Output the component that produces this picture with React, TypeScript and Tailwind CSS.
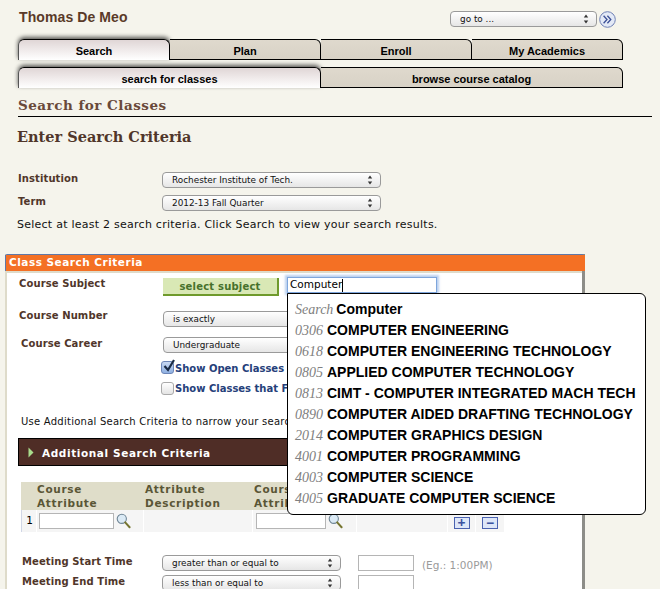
import React from "react";

const verdana = "font-['DejaVu_Sans',sans-serif]";
const arial = "font-['Liberation_Sans',Arial,sans-serif]";
const serif = "font-['DejaVu_Serif',Georgia,serif]";

const results = [
  { code: "0306", name: "COMPUTER ENGINEERING" },
  { code: "0618", name: "COMPUTER ENGINEERING TECHNOLOGY" },
  { code: "0805", name: "APPLIED COMPUTER TECHNOLOGY" },
  { code: "0813", name: "CIMT - COMPUTER INTEGRATED MACH TECH" },
  { code: "0890", name: "COMPUTER AIDED DRAFTING TECHNOLOGY" },
  { code: "2014", name: "COMPUTER GRAPHICS DESIGN" },
  { code: "4001", name: "COMPUTER PROGRAMMING" },
  { code: "4003", name: "COMPUTER SCIENCE" },
  { code: "4005", name: "GRADUATE COMPUTER SCIENCE" },
];

function Select({ label, className }: { label: string; className: string }) {
  return (
    <div
      className={`flex h-[16px] items-center justify-between rounded-[4px] border border-[#9a9a9a] bg-gradient-to-b from-white to-[#e6e6e6] pl-[9px] pr-[7px] text-[8.9px] text-[#111] ${verdana} ${className}`}
    >
      <span className="translate-y-[1px] whitespace-nowrap">{label}</span>
      <svg width="6" height="10" viewBox="0 0 6 10" className="shrink-0">
        <path d="M3 0.5 5.2 3.5H0.8Z M3 9.5 5.2 6.5H0.8Z" fill="#333" />
      </svg>
    </div>
  );
}

function Tab({ label, active, className }: { label: string; active?: boolean; className: string }) {
  return (
    <div
      className={`flex h-[21px] items-center justify-center rounded-tr-[6px] border-t border-black text-[11px] font-bold text-black ${arial} ${className} ${
        active
          ? "rounded-tl-[6px] border-l border-l-[#555] border-r border-r-black bg-gradient-to-b from-[#e0d6d6] to-white pt-[2px] shadow-[0_-2px_4px_rgba(0,0,0,0.65)]"
          : "border-b border-r border-black bg-gradient-to-b from-[#dfd9cd] to-[#d8d2c6] pt-[3px]"
      }`}
    >
      {label}
    </div>
  );
}

function Magnifier() {
  return (
    <svg width="15" height="16" viewBox="0 0 15 16" className="shrink-0">
      <circle cx="5.8" cy="5.8" r="4.6" fill="#dbeaf5" stroke="#6f8595" strokeWidth="1.1" />
      <path d="M9.2 9.4 13.6 14.2" stroke="#76752f" strokeWidth="2" strokeLinecap="round" />
    </svg>
  );
}

function Label({ children, className }: { children: React.ReactNode; className: string }) {
  return (
    <div className={`whitespace-nowrap text-[10px] font-bold tracking-[0.1px] text-[#50362a] ${verdana} ${className}`}>
      {children}
    </div>
  );
}

export default function App() {
  return (
    <div className="relative h-[589px] w-[660px] overflow-hidden bg-[#f5f4ec]">
      {/* top bar */}
      <div className="flex h-[39px] items-start justify-between pl-[19px] pr-[44px] pt-[10px]">
        <div className={`text-[14px] font-bold leading-[15px] tracking-[0.1px] text-[#5a3a28] ${arial}`}>Thomas De Meo</div>
        <div className="flex items-center gap-[2px]">
          <Select label="go to ..." className="w-[147px]" />
          <svg width="17" height="17" viewBox="0 0 17 17" className="mt-[1px]">
            <circle cx="8.5" cy="8.5" r="7.8" fill="#e3e9f6" stroke="#6f80b5" strokeWidth="1" />
            <path d="M4.6 4.8 8 8.5 4.6 12.2M8.4 4.8 11.8 8.5 8.4 12.2" fill="none" stroke="#3b4f96" strokeWidth="1.3" />
          </svg>
        </div>
      </div>

      {/* tabs */}
      <div className="ml-[18px] flex">
        <Tab label="Search" active className="w-[152px]" />
        <Tab label="Plan" className="w-[151px]" />
        <Tab label="Enroll" className="w-[151px]" />
        <Tab label="My Academics" className="w-[151px]" />
      </div>
      <div className="ml-[18px] mt-[7px] flex">
        <Tab label="search for classes" active className="w-[303px]" />
        <Tab label="browse course catalog" className="w-[302px]" />
      </div>

      {/* headings */}
      <div className="ml-[18px] mr-[8px] mt-[9px] h-[20px] border-b border-black">
        <div className={`text-[13.5px] font-bold leading-[17px] tracking-[0.5px] text-[#69493a] ${serif}`}>
          Search for Classes
        </div>
      </div>
      <div className={`ml-[17px] mt-[10px] text-[14.5px] font-bold leading-[20px] text-[#50362a] ${serif}`}>
        Enter Search Criteria
      </div>

      {/* institution and term */}
      <div className="ml-[18px] mt-[25px] flex h-[16px] items-center">
        <Label className="w-[144px] -translate-y-[2px]">Institution</Label>
        <Select label="Rochester Institute of Tech." className="w-[219px]" />
      </div>
      <div className="ml-[18px] mt-[7px] flex h-[16px] items-center">
        <Label className="w-[144px] -translate-y-[2px]">Term</Label>
        <Select label="2012-13 Fall Quarter" className="w-[219px]" />
      </div>
      <div className={`ml-[17px] mt-[6px] h-[16px] text-[11px] leading-[16px] tracking-[0.25px] text-[#111] ${verdana}`}>
        Select at least 2 search criteria. Click Search to view your search results.
      </div>

      {/* panel */}
      <div className="ml-[5px] mt-[21px] h-[400px] w-[580px] border-l-[2px] border-r-[3px] border-t border-l-[#dedbca] border-r-[#8d8d88] border-t-[#5f78a8] bg-white">
        <div className={`-ml-[2px] -mr-[3px] flex h-[16px] items-center border-l border-[#5f78a8] bg-[#f47024] pl-[3px] text-[10.5px] font-bold tracking-[0.5px] text-white ${verdana}`}>
          Class Search Criteria
        </div>
        <div className="h-[2px] bg-[#dedbca]" />

        <div className="flex h-[23px] items-start pl-[12px] pt-[5px]">
          <Label className="w-[144px] -translate-y-[2px]">Course Subject</Label>
          <div className={`flex h-[18px] w-[116px] items-center justify-center border-b-[2px] border-r-[2px] border-[#6f9a2c] bg-[#d9e8b5] text-[10px] font-bold tracking-[0.2px] text-[#47712c] ${verdana}`}>
            select subject
          </div>
          <div className={`ml-[8px] -mt-[1px] flex h-[16px] w-[150px] items-center border border-[#7ea6dc] bg-white pl-[2px] text-[10.5px] text-black shadow-[0_0_2px_2px_rgba(130,170,225,0.55)] ${verdana}`}>
            Computer<span className="h-[13px] w-px bg-black" />
          </div>
        </div>

        <div className="mt-[15px] flex h-[16px] items-center pl-[12px]">
          <Label className="w-[144px] -translate-y-[4px]">Course Number</Label>
          <Select label="is exactly" className="w-[180px]" />
        </div>
        <div className="mt-[10px] flex h-[16px] items-center pl-[14px]">
          <Label className="w-[142px] -translate-y-[2px]">Course Career</Label>
          <Select label="Undergraduate" className="w-[180px]" />
        </div>

        <div className="ml-[154px] mt-[7px] flex h-[14px] items-center gap-[1px]">
          <div className="relative h-[13px] w-[13px] rounded-[3px] border border-[#6d86b8] bg-gradient-to-b from-[#c9d9f2] to-[#8fb0e2]">
            <svg width="15" height="15" viewBox="0 0 15 15" className="absolute -top-[3px] left-[0px]">
              <path d="M2.5 7 6 11 12 1" fill="none" stroke="#1a2a44" strokeWidth="2.2" />
            </svg>
          </div>
          <span className={`translate-y-[1px] whitespace-nowrap text-[10px] font-bold text-[#25407a] ${verdana}`}>Show Open Classes</span>
        </div>
        <div className="ml-[154px] mt-[7px] flex h-[14px] items-center gap-[1px]">
          <div className="h-[13px] w-[13px] rounded-[3px] border border-[#aaa] bg-gradient-to-b from-white to-[#e4e4e4]" />
          <span className={`whitespace-nowrap text-[10px] font-bold text-[#25407a] ${verdana}`}>Show Classes that F</span>
        </div>

        <div className={`ml-[14px] mt-[20px] h-[14px] whitespace-nowrap text-[10px] leading-[14px] tracking-[0.25px] text-[#111] ${verdana}`}>
          Use Additional Search Criteria to narrow your search
        </div>

        {/* additional criteria bar */}
        <div className="ml-[11px] mt-[9px] flex h-[28px] w-[560px] items-center gap-[8px] border border-black bg-[#4f2d26] pl-[9px]">
          <svg width="6" height="11" viewBox="0 0 6 11">
            <path d="M0.5 0.5 5.5 5.5 0.5 10.5Z" fill="#a9dc8c" />
          </svg>
          <span className={`translate-y-[2px] whitespace-nowrap text-[10.5px] font-bold tracking-[0.6px] text-white ${verdana}`}>
            Additional Search Criteria
          </span>
        </div>

        {/* attribute table */}
        <div className="ml-[14px] mt-[16px] w-[484px]">
          <div className={`flex h-[28px] bg-[#dfddc9] text-[10.5px] font-bold leading-[14px] tracking-[0.7px] text-[#5a5636] ${verdana}`}>
            <div className="ml-[16px] w-[108px]">Course<br />Attribute</div>
            <div className="w-[109px]">Attribute<br />Description</div>
            <div>Course<br />Attribute</div>
          </div>
          <div className="flex h-[22px] gap-[1px]">
            <div className={`flex w-[15px] items-center justify-center border-l border-[#d0d6e6] bg-[#f5f5f5] pl-[1px] text-[10.5px] text-black ${verdana}`}>1</div>
            <div className="flex w-[106px] items-center gap-[2px] bg-[#f5f5f5] pl-[2px]">
              <div className="h-[16px] w-[75px] border border-[#b5b5b5] bg-white" />
              <Magnifier />
            </div>
            <div className="w-[108px] bg-[#f5f5f5]" />
            <div className="flex w-[103px] items-center gap-[2px] bg-[#f5f5f5] pl-[3px]">
              <div className="h-[16px] w-[70px] border border-[#b5b5b5] bg-white" />
              <Magnifier />
            </div>
            <div className="w-[90px] bg-[#f5f5f5]" />
            <div className="flex w-[27px] items-start justify-center bg-[#f5f5f5] pt-[7px]">
              <div className="flex h-[12px] w-[16px] items-center justify-center border border-[#4a62b0] bg-[#dde6f8] text-[14px] font-bold leading-none text-[#3a52a0]">+</div>
            </div>
            <div className="flex w-[28px] items-start justify-center bg-[#f5f5f5] pt-[7px]">
              <div className="flex h-[12px] w-[16px] items-center justify-center border border-[#4a62b0] bg-[#dde6f8] text-[14px] font-bold leading-none text-[#3a52a0]">−</div>
            </div>
          </div>
        </div>

        {/* meeting times */}
        <div className="ml-[15px] mt-[23px] flex h-[16px] items-center">
          <Label className="w-[140px] -translate-y-[2px]">Meeting Start Time</Label>
          <Select label="greater than or equal to" className="w-[179px]" />
          <div className="ml-[17px] h-[16px] w-[56px] border border-[#b5b5b5] bg-white" />
          <span className={`ml-[8px] translate-y-[3px] whitespace-nowrap text-[10.5px] text-[#9a9a9a] ${verdana}`}>(Eg.: 1:00PM)</span>
        </div>
        <div className="ml-[15px] mt-[4px] flex h-[16px] items-center">
          <Label className="w-[140px] -translate-y-[2px]">Meeting End Time</Label>
          <Select label="less than or equal to" className="w-[179px]" />
          <div className="ml-[17px] h-[16px] w-[56px] border border-[#b5b5b5] bg-white" />
        </div>
      </div>

      {/* autocomplete popup */}
      <div className={`absolute left-[287px] top-[293px] h-[222px] w-[359px] rounded-b-[6px] rounded-tr-[6px] border border-black bg-white pl-[7px] pt-[5px] text-[14px] font-bold leading-[21px] text-black ${arial}`}>
        <div className="flex gap-[3px]">
          <span className="font-['Liberation_Serif',serif] font-normal italic text-[#808080]">Search</span>
          <span>Computer</span>
        </div>
        {results.map((r) => (
          <div key={r.code} className="flex gap-[4px] whitespace-nowrap">
            <span className="font-['Liberation_Serif',serif] font-normal italic text-[#808080]">{r.code}</span>
            <span>{r.name}</span>
          </div>
        ))}
      </div>
    </div>
  );
}
